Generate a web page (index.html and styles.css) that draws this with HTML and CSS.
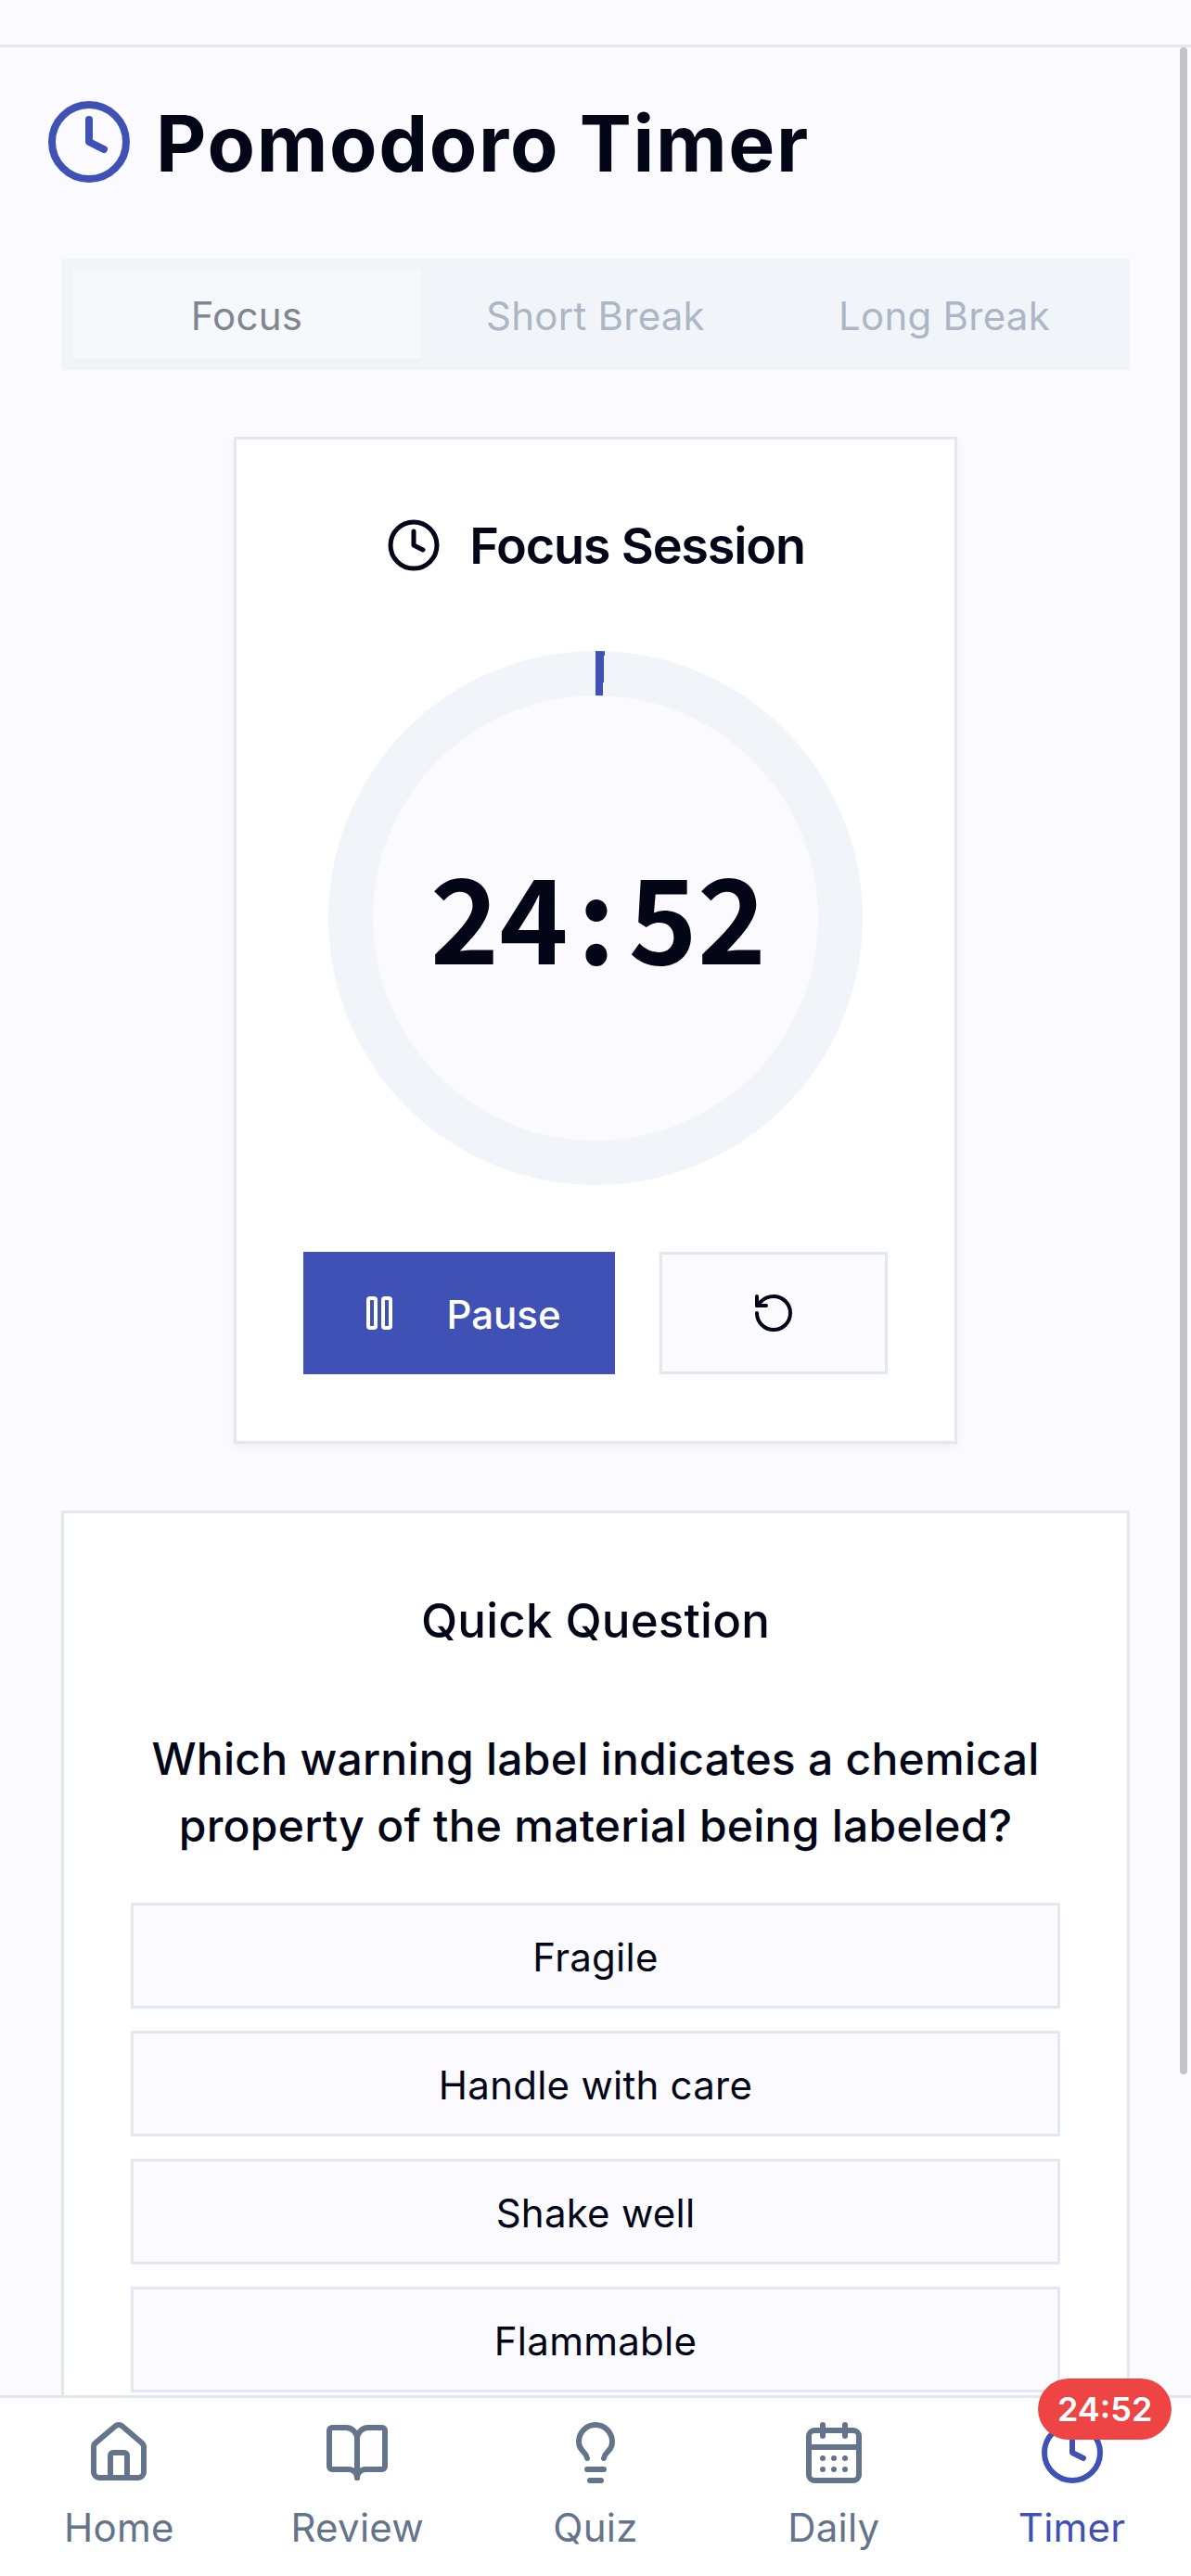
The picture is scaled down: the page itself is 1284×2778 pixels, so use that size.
FILE: index.html
```
<!DOCTYPE html>
<html lang="en">
<head>
<meta charset="utf-8">
<title>Pomodoro Timer</title>
<link rel="stylesheet" href="styles.css">
</head>
<body>
<div class="app">
  <div class="topbar"></div>
  <main class="content">
    <header class="page-title">
      <svg class="icon icon-title" viewBox="0 0 24 24"><circle cx="12" cy="12" r="10"/><polyline points="12 6 12 12 16 14"/></svg>
      <h1>Pomodoro Timer</h1>
    </header>
    <div class="tabs">
      <div class="tab tab-active"><span>Focus</span></div>
      <div class="tab"><span>Short Break</span></div>
      <div class="tab"><span>Long Break</span></div>
    </div>
    <section class="timer-card">
      <h2 class="session"><svg class="icon icon-session" viewBox="0 0 24 24"><circle cx="12" cy="12" r="10"/><polyline points="12 6 12 12 16 14"/></svg>Focus Session</h2>
      <div class="ring"><div class="ring-inner"><span class="time">24<span class="colon">:</span>52</span></div></div>
      <div class="controls">
        <button class="btn btn-primary"><svg class="icon icon-btn" viewBox="0 0 24 24"><rect x="14" y="4" width="4" height="16" rx="1"/><rect x="6" y="4" width="4" height="16" rx="1"/></svg><span>Pause</span></button>
        <button class="btn btn-reset"><svg class="icon icon-btn" viewBox="0 0 24 24"><path d="M3 12a9 9 0 1 0 9-9 9.75 9.75 0 0 0-6.74 2.74L3 8"/><path d="M3 3v5h5"/></svg></button>
      </div>
    </section>
    <section class="quiz-card">
      <h3 class="quiz-title">Quick Question</h3>
      <p class="question">Which warning label indicates a chemical property of the material being labeled?</p>
      <div class="options">
        <button class="option">Fragile</button>
        <button class="option">Handle with care</button>
        <button class="option">Shake well</button>
        <button class="option">Flammable</button>
      </div>
    </section>
  </main>
  <nav class="nav">
    <div class="nav-item">
      <svg class="icon icon-nav" viewBox="0 0 24 24"><path d="M15 21v-8a1 1 0 0 0-1-1h-4a1 1 0 0 0-1 1v8"/><path d="M3 10a2 2 0 0 1 .709-1.528l7-5.999a2 2 0 0 1 2.582 0l7 5.999A2 2 0 0 1 21 10v9a2 2 0 0 1-2 2H5a2 2 0 0 1-2-2z"/></svg>
      <span>Home</span>
    </div>
    <div class="nav-item">
      <svg class="icon icon-nav" viewBox="0 0 24 24"><path d="M12 7v14"/><path d="M3 18a1 1 0 0 1-1-1V4a1 1 0 0 1 1-1h5a4 4 0 0 1 4 4 4 4 0 0 1 4-4h5a1 1 0 0 1 1 1v13a1 1 0 0 1-1 1h-6a3 3 0 0 0-3 3 3 3 0 0 0-3-3z"/></svg>
      <span>Review</span>
    </div>
    <div class="nav-item">
      <svg class="icon icon-nav" viewBox="0 0 24 24"><path d="M15 14c.2-1 .7-1.7 1.5-2.5 1-.9 1.5-2.2 1.5-3.5A6 6 0 0 0 6 8c0 1 .2 2.2 1.5 3.5.7.7 1.3 1.5 1.5 2.5"/><path d="M9 18h6"/><path d="M10 22h4"/></svg>
      <span>Quiz</span>
    </div>
    <div class="nav-item">
      <svg class="icon icon-nav" viewBox="0 0 24 24"><path d="M8 2v4"/><path d="M16 2v4"/><rect x="3" y="4" width="18" height="18" rx="2"/><path d="M3 10h18"/><path d="M8 14h.01"/><path d="M12 14h.01"/><path d="M16 14h.01"/><path d="M8 18h.01"/><path d="M12 18h.01"/><path d="M16 18h.01"/></svg>
      <span>Daily</span>
    </div>
    <div class="nav-item nav-active">
      <svg class="icon icon-nav" viewBox="0 0 24 24"><circle cx="12" cy="12" r="10"/><polyline points="12 6 12 12 16 14"/></svg>
      <span>Timer</span>
      <div class="badge">24:52</div>
    </div>
  </nav>
  <div class="scrollbar"></div>
</div>
</body>
</html>
```

FILE: styles.css
```
* { box-sizing: border-box; }
html, body { margin: 0; padding: 0; height: 100%; overflow: hidden; }
body { font-family: Inter, "Liberation Sans", sans-serif; color: #020617; background: #fafaff; letter-spacing: .25px; }
.app { position: relative; display: flex; flex-direction: column; height: 2778px; }
.topbar { flex: none; height: 51px; border-bottom: 3px solid #e2e8f0; }
.content { flex: 1; min-height: 0; overflow: hidden; padding: 39px 66px 0; display: flex; flex-direction: column; }
.icon { display: block; flex: none; fill: none; stroke: currentColor; stroke-width: 2; stroke-linecap: round; stroke-linejoin: round; }
.page-title { flex: none; display: flex; align-items: center; gap: 24px; height: 126px; margin: 0 0 63px -18px; }
.icon-title { width: 96px; height: 96px; color: #3f51b5; }
h1 { margin: 0; padding-top: 3px; font-size: 84px; line-height: 126px; font-weight: 700; letter-spacing: 1.7px; }
.tabs { flex: none; display: grid; grid-template-columns: repeat(3, 1fr); height: 120px; padding: 12px; background: #f1f5f9; margin-bottom: 72px; }
.tab { display: flex; align-items: center; justify-content: center; padding-top: 2px; font-size: 42px; color: #adb6c4; }
.tab-active { background: #f6f9fc; box-shadow: 0 3px 6px rgba(0,0,0,.02); color: #808590; }
.timer-card { flex: none; width: 780px; margin: 0 auto 72px; padding: 72px; background: #fff; border: 3px solid #e2e8f0; box-shadow: 0 3px 9px rgba(0,0,0,.05); }
.session { margin: 0 0 72px; height: 84px; display: flex; align-items: center; justify-content: center; gap: 30px; font-size: 54px; font-weight: 600; letter-spacing: -1.2px; }
.icon-session { width: 60px; height: 60px; }
.ring { width: 576px; height: 576px; margin: 0 auto 72px; padding: 48px; border-radius: 50%; background: conic-gradient(#3f51b5 1.92deg, #f1f5f9 0); }
.ring-inner { width: 100%; height: 100%; border-radius: 50%; background: #fafaff; display: flex; align-items: center; justify-content: center; }
.time { font-family: "Noto Sans CJK JP", "Noto Sans", sans-serif; font-size: 126px; font-weight: 700; line-height: 160px; padding: 0 0 10px 6px; letter-spacing: 0; }
.colon { margin: 0 14px 0 10px; }
.controls { display: flex; gap: 48px; }
.btn { height: 132px; display: flex; align-items: center; justify-content: center; font-family: inherit; font-size: 42px; font-weight: 500; padding: 0; border: 3px solid #e2e8f0; }
.btn span { padding-top: 3px; }
.btn-primary { width: 336px; gap: 48px; background: #3f51b5; border: 0; color: #fff; }
.btn-reset { width: 246px; background: #fafaff; color: #020617; }
.icon-btn { width: 48px; height: 48px; }
.quiz-card { flex: none; padding: 72px; background: #fff; border: 3px solid #e2e8f0; }
.quiz-title { margin: 0 0 69px; font-size: 51px; line-height: 88px; font-weight: 550; text-align: center; letter-spacing: .2px; }
.question { margin: 0 0 47px; font-size: 48px; line-height: 72px; font-weight: 550; text-align: center; }
.options { display: flex; flex-direction: column; gap: 24px; }
.option { height: 114px; padding: 2px 0 0; font-family: inherit; font-size: 42px; letter-spacing: .25px; color: #020617; background: #fafaff; border: 3px solid #e2e8f0; }
.nav { flex: none; height: 195px; display: grid; grid-template-columns: repeat(5, 1fr); background: #fff; border-top: 3px solid #e2e8f0; position: relative; }
.nav-item { position: relative; display: flex; flex-direction: column; align-items: center; padding-top: 23px; color: #64748b; font-size: 42px; line-height: 63px; gap: 13px; }
.icon-nav { width: 72px; height: 72px; }
.nav-active { color: #3f51b5; }
.badge { position: absolute; top: -21px; left: 92px; width: 144px; height: 66px; border-radius: 33px; background: #ef4444; color: #fff; font-size: 36px; font-weight: 600; line-height: 66px; text-align: center; letter-spacing: 0; }
.scrollbar { position: absolute; top: 51px; right: 4px; width: 8px; height: 2186px; border-radius: 4px; background: #c4c4c4; }
```
